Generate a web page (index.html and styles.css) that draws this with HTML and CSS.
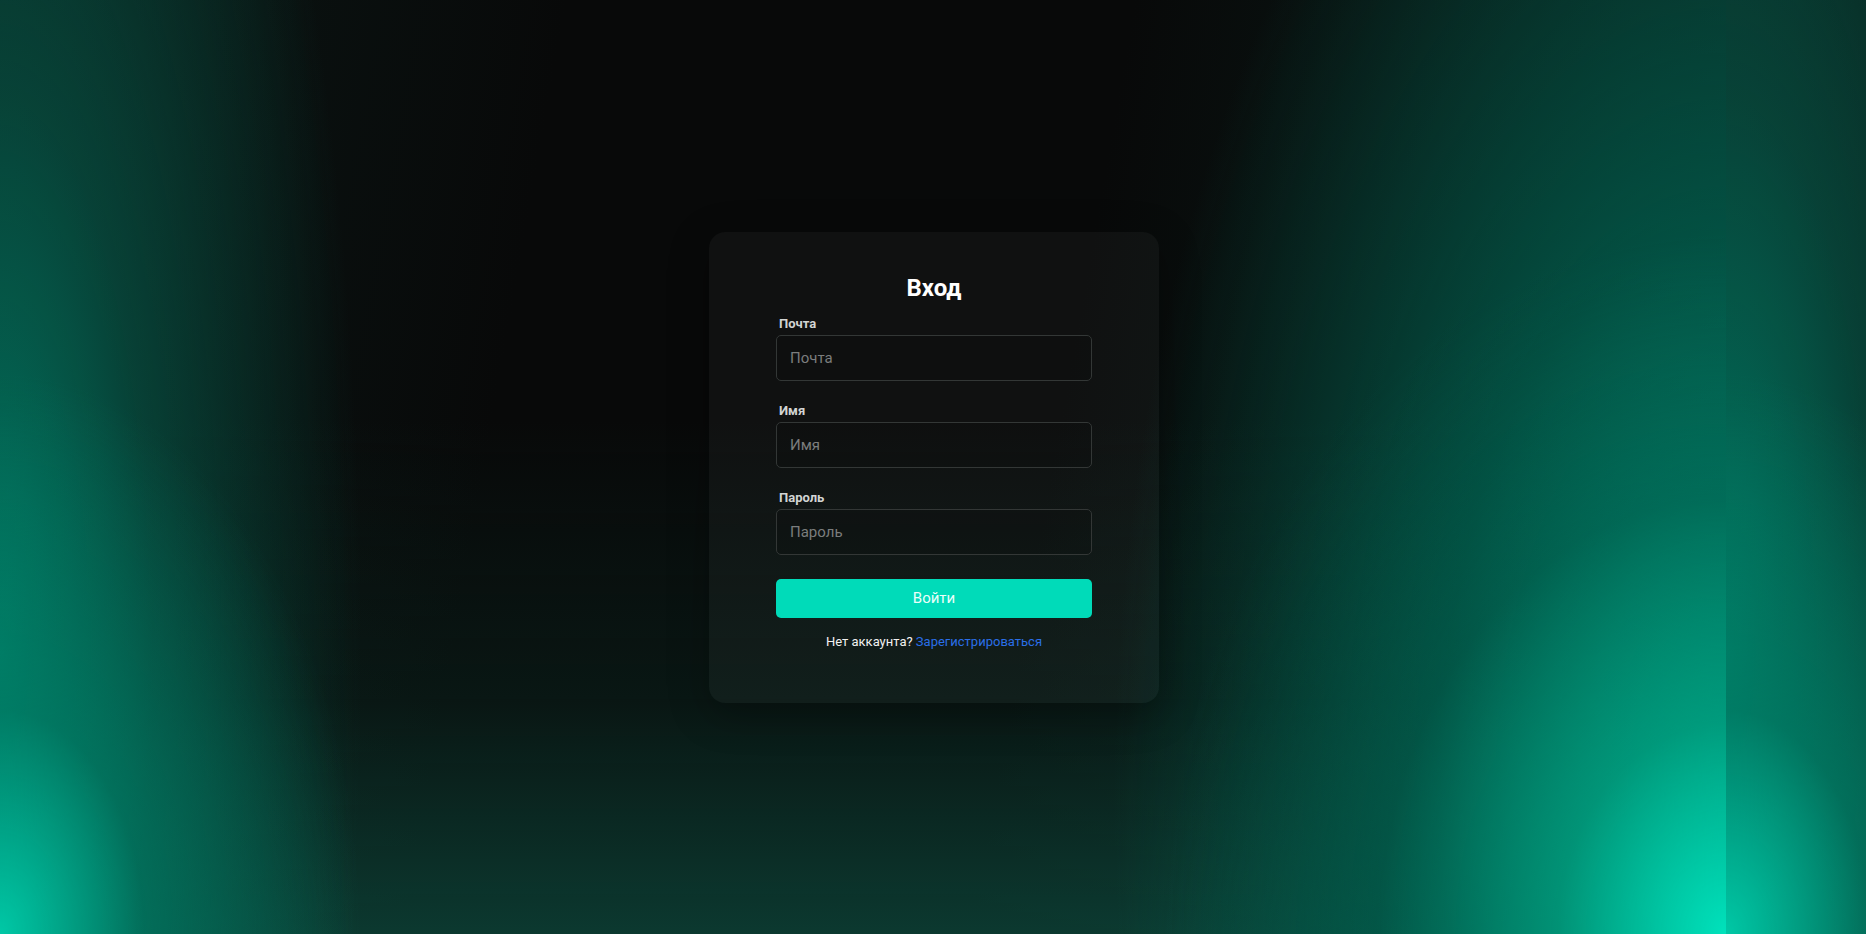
FILE: index.html
```html
<!DOCTYPE html>
<html lang="ru">
<head>
<meta charset="utf-8">
<title>Вход</title>
<link rel="stylesheet" href="styles.css">
</head>
<body>
<main class="page">
  <form class="card">
    <h2 class="title">Вход</h2>
    <div class="fields">
      <div class="field">
        <label class="label" for="email">Почта</label>
        <input class="input" id="email" type="text" placeholder="Почта">
      </div>
      <div class="field">
        <label class="label" for="name">Имя</label>
        <input class="input" id="name" type="text" placeholder="Имя">
      </div>
      <div class="field">
        <label class="label" for="pass">Пароль</label>
        <input class="input" id="pass" type="password" placeholder="Пароль">
      </div>
    </div>
    <button class="btn" type="button">Войти</button>
    <p class="foot">Нет аккаунта? <a class="link" href="#">Зарегистрироваться</a></p>
  </form>
</main>
</body>
</html>
```
FILE: styles.css
```css
html, body {
  margin: 0;
  padding: 0;
  height: 100%;
}
body {
  font-family: Roboto, "Liberation Sans", Arial, sans-serif;
  background-color: #080909;
  color: #fff;
}
.page {
  min-height: 100vh;
  display: flex;
  align-items: center;
  justify-content: center;
  padding-left: 2px;
  box-sizing: border-box;
  background-image:
    radial-gradient(ellipse 560px 700px at 100% 100%, rgba(0,226,188,1) 0%, rgba(0,160,128,0.7) 30%, rgba(0,96,78,0.35) 62%, rgba(0,60,50,0) 100%),
    radial-gradient(ellipse 360px 560px at 0% 100%, rgba(0,200,166,1) 0%, rgba(0,128,104,0.65) 40%, rgba(0,60,50,0) 100%),
    radial-gradient(ellipse 720px 1400px at 100% 85%, rgba(0,160,130,0.95) 0%, rgba(0,100,82,0.7) 40%, rgba(10,40,34,0) 85%),
    radial-gradient(ellipse 380px 1400px at 0% 70%, rgba(0,120,98,1) 0%, rgba(6,80,66,0.75) 40%, rgba(8,20,18,0) 95%),
    linear-gradient(to top, rgba(12,62,52,0.9) 0%, rgba(10,36,30,0.5) 25%, rgba(8,9,9,0) 55%),
    linear-gradient(100deg, #0b1816 0%, #080909 30%, #080909 60%, #0b2520 100%);
  background-size: 1726px 100%;
  background-repeat: repeat-x;
}
.card {
  width: 450px;
  box-sizing: border-box;
  padding: 42px 67px 54px 67px;
  background: rgba(255,255,255,0.035);
  border-radius: 16px;
  box-shadow: 0 10px 40px rgba(0,0,0,0.3);
  display: flex;
  flex-direction: column;
}
.title {
  margin: 0 0 14px;
  text-align: center;
  font-size: 24px;
  line-height: 28px;
  font-weight: 700;
  color: #fff;
}
.fields {
  display: flex;
  flex-direction: column;
  gap: 22px;
}
.field {
  display: flex;
  flex-direction: column;
}
.label {
  font-size: 13px;
  line-height: 15px;
  font-weight: 700;
  color: #d2d4d3;
  margin: 0 0 4px 3px;
}
.input {
  box-sizing: border-box;
  height: 46px;
  width: 100%;
  padding: 0 13px;
  border: 1px solid #333736;
  border-radius: 5px;
  background: rgba(10,12,12,0.2);
  color: #ddd;
  font-family: inherit;
  font-size: 15px;
  outline: none;
}
.input::placeholder {
  color: #7b7d7d;
}
.btn {
  margin-top: 24px;
  height: 39px;
  width: 100%;
  border: 0;
  border-radius: 5px;
  background: #00dbb9;
  color: #eafffa;
  font-family: inherit;
  font-size: 15px;
  font-weight: 400;
  cursor: pointer;
}
.foot {
  margin: 16px 0 0;
  text-align: center;
  font-size: 13px;
  line-height: 15px;
  color: #f2f2f2;
}
.link {
  color: #2a6fe8;
  text-decoration: none;
}
```
